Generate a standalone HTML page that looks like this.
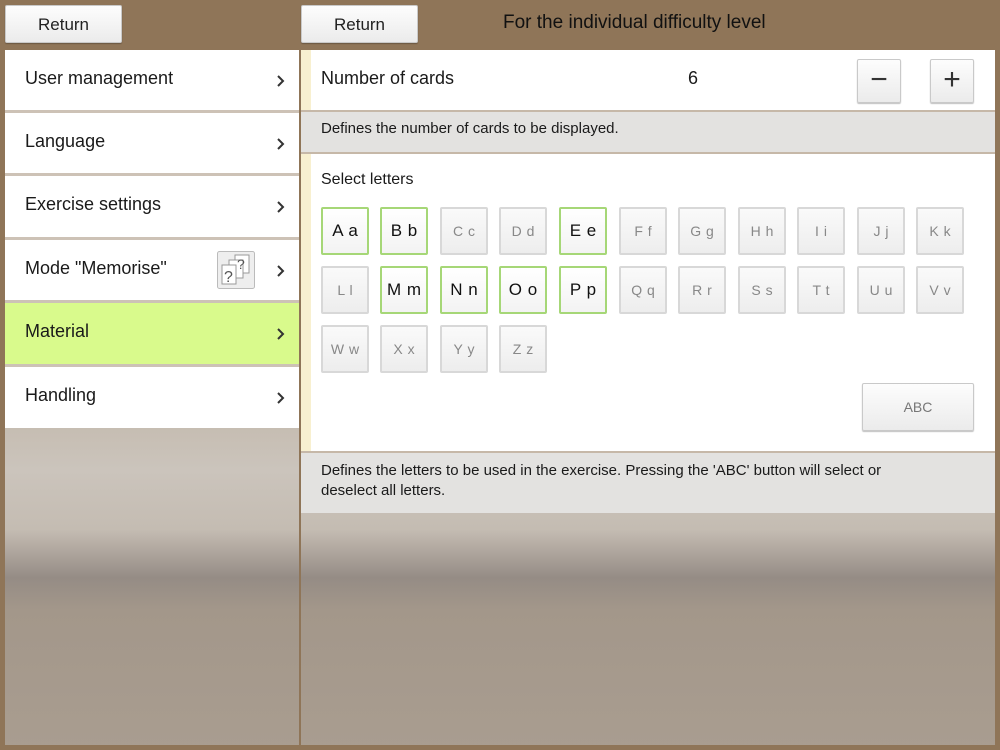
<!DOCTYPE html>
<html><head><style>
*{margin:0;padding:0;box-sizing:border-box}
body{width:1000px;height:750px;overflow:hidden;background:#8f7558;font-family:"Liberation Sans",sans-serif;position:relative}
.abs{position:absolute}
.btn{position:absolute;background:linear-gradient(#fdfdfd,#ebebeb);border:1px solid #c9c9c9;border-radius:2px;box-shadow:0 1px 1px rgba(0,0,0,.25);text-align:center;color:#222}
.bg{position:absolute;background:linear-gradient(180deg,#c6bdb2 428px,#cbc4bc 470px,#c4bcb2 530px,#958c85 578px,#a3978a 610px,#a99d90 750px);background-attachment:fixed}
.item{position:absolute;left:5px;width:294px;height:61px;background:#fff;font-size:18px;color:#1a1a1a;padding:18px 0 0 20px}
.item svg.ch{position:absolute;left:271px;top:24px}
.t{position:absolute;width:48px;height:48px;background:linear-gradient(#fafafa,#ededed);border:2px solid #d8d8d8;border-radius:2px;text-align:center;line-height:44px;font-size:14px;color:#888;letter-spacing:0px;word-spacing:1px}
.t.s{border-color:#a6d777;color:#111;font-size:17px;background:linear-gradient(#fff,#f3f3f3)}
</style></head><body>
<div class="btn" style="left:5px;top:5px;width:117px;height:38px;line-height:37px;font-size:17px">Return</div>
<div class="btn" style="left:301px;top:5px;width:117px;height:38px;line-height:37px;font-size:17px">Return</div>
<div class="abs" style="left:503px;top:12px;font-size:19px;color:#111">For the individual difficulty level</div>

<div class="bg" style="left:5px;top:428px;width:294px;height:317px"></div>
<div class="item" style="top:50px">User management<svg class="ch" width="10" height="14"><path d="M2 2L7 7L2 12" fill="none" stroke="#333" stroke-width="2"/></svg></div>
<div class="item" style="top:113px">Language<svg class="ch" width="10" height="14"><path d="M2 2L7 7L2 12" fill="none" stroke="#333" stroke-width="2"/></svg></div>
<div class="item" style="top:176px">Exercise settings<svg class="ch" width="10" height="14"><path d="M2 2L7 7L2 12" fill="none" stroke="#333" stroke-width="2"/></svg></div>
<div class="item" style="top:240px">Mode "Memorise"<svg class="ch" width="10" height="14"><path d="M2 2L7 7L2 12" fill="none" stroke="#333" stroke-width="2"/></svg>
<svg class="abs" style="left:212px;top:11px" width="38" height="38" viewBox="0 0 38 38"><rect x=".5" y=".5" width="37" height="37" rx="2" fill="#eee" stroke="#bbb"/><rect x="18" y="4" width="14" height="18" fill="#fff" stroke="#999"/><rect x="12" y="9" width="14" height="18" fill="#fff" stroke="#999"/><rect x="5" y="14" width="14" height="19" fill="#fff" stroke="#999"/><text x="7" y="31" font-size="16" font-family="Liberation Sans" fill="#555">?</text><text x="20" y="18" font-size="14" font-family="Liberation Sans" fill="#555">?</text></svg></div>
<div class="item" style="top:303px;background:#d9fa8c">Material<svg class="ch" width="10" height="14"><path d="M2 2L7 7L2 12" fill="none" stroke="#333" stroke-width="2"/></svg></div>
<div class="item" style="top:367px">Handling<svg class="ch" width="10" height="14"><path d="M2 2L7 7L2 12" fill="none" stroke="#333" stroke-width="2"/></svg></div>
<div class="abs" style="left:5px;top:110px;width:294px;height:3px;background:#cdc2b6"></div>
<div class="abs" style="left:5px;top:173px;width:294px;height:3px;background:#cdc2b6"></div>
<div class="abs" style="left:5px;top:237px;width:294px;height:3px;background:#cdc2b6"></div>
<div class="abs" style="left:5px;top:300px;width:294px;height:3px;background:#cdc2b6"></div>
<div class="abs" style="left:5px;top:364px;width:294px;height:3px;background:#cdc2b6"></div>

<div class="bg" style="left:301px;top:512px;width:694px;height:233px"></div>
<div class="abs" style="left:301px;top:50px;width:694px;height:60px;background:#fff;border-left:10px solid #f8f0d0"></div>
<div class="abs" style="left:321px;top:68px;font-size:18px;color:#1a1a1a">Number of cards</div>
<div class="abs" style="left:688px;top:68px;font-size:18px;color:#1a1a1a">6</div>
<div class="btn" style="left:857px;top:59px;width:44px;height:44px;line-height:40px;font-size:30px;color:#333">−</div>
<div class="btn" style="left:930px;top:59px;width:44px;height:44px;line-height:40px;font-size:30px;color:#333">+</div>
<div class="abs" style="left:301px;top:110px;width:694px;height:44px;background:#e3e2e0;border-top:2px solid #c6b8a8;border-bottom:2px solid #c6b8a8"></div>
<div class="abs" style="left:321px;top:120px;font-size:15px;color:#1a1a1a">Defines the number of cards to be displayed.</div>
<div class="abs" style="left:301px;top:154px;width:694px;height:297px;background:#fff;border-left:10px solid #f8f0d0"></div>
<div class="abs" style="left:321px;top:171px;font-size:16px;color:#1a1a1a">Select letters</div>

<div class="t s" style="left:321px;top:207px">A a</div>
<div class="t s" style="left:380px;top:207px">B b</div>
<div class="t" style="left:440px;top:207px">C c</div>
<div class="t" style="left:499px;top:207px">D d</div>
<div class="t s" style="left:559px;top:207px">E e</div>
<div class="t" style="left:619px;top:207px">F f</div>
<div class="t" style="left:678px;top:207px">G g</div>
<div class="t" style="left:738px;top:207px">H h</div>
<div class="t" style="left:797px;top:207px">I i</div>
<div class="t" style="left:857px;top:207px">J j</div>
<div class="t" style="left:916px;top:207px">K k</div>
<div class="t" style="left:321px;top:266px">L l</div>
<div class="t s" style="left:380px;top:266px">M m</div>
<div class="t s" style="left:440px;top:266px">N n</div>
<div class="t s" style="left:499px;top:266px">O o</div>
<div class="t s" style="left:559px;top:266px">P p</div>
<div class="t" style="left:619px;top:266px">Q q</div>
<div class="t" style="left:678px;top:266px">R r</div>
<div class="t" style="left:738px;top:266px">S s</div>
<div class="t" style="left:797px;top:266px">T t</div>
<div class="t" style="left:857px;top:266px">U u</div>
<div class="t" style="left:916px;top:266px">V v</div>
<div class="t" style="left:321px;top:325px">W w</div>
<div class="t" style="left:380px;top:325px">X x</div>
<div class="t" style="left:440px;top:325px">Y y</div>
<div class="t" style="left:499px;top:325px">Z z</div>
<div class="btn" style="left:862px;top:383px;width:112px;height:48px;line-height:46px;font-size:14px;color:#777">ABC</div>

<div class="abs" style="left:301px;top:451px;width:694px;height:62px;background:#e3e2e0;border-top:2px solid #c6b8a8"></div>
<div class="abs" style="left:321px;top:461px;width:580px;font-size:15px;line-height:20px;color:#1a1a1a">Defines the letters to be used in the exercise. Pressing the 'ABC' button will select or deselect all letters.</div>
</body></html>
